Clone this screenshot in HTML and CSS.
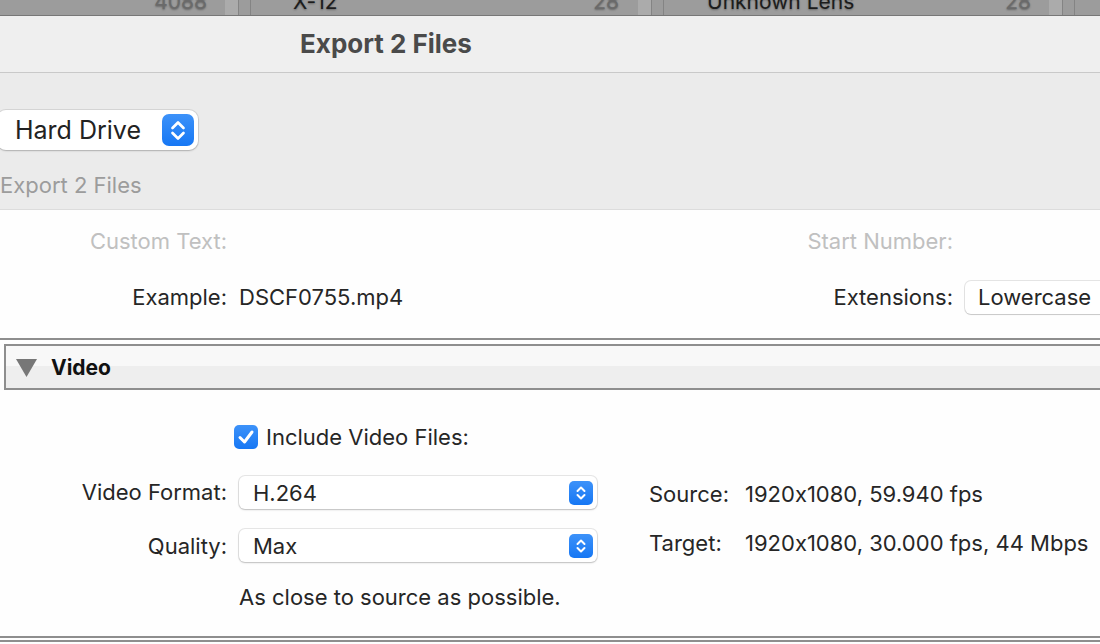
FILE: index.html
```html
<!DOCTYPE html>
<html>
<head>
<meta charset="utf-8">
<title>Export 2 Files</title>
<link rel="stylesheet" href="styles.css">
</head>
<body>
<div class="strip">
  <div class="cell cell-a"><span class="dim"></span><span class="dim">4088</span></div>
  <div class="sep"></div><div class="sep2"></div>
  <div class="cell cell-b"><span class="dark">X-12</span><span class="dim">28</span></div>
  <div class="sep"></div><div class="sep2"></div>
  <div class="cell cell-c"><span class="dark">Unknown Lens</span><span class="dim">28</span></div>
  <div class="sep"></div><div class="sep2"></div>
</div>

<header class="title-bar"><h1>Export 2 Files</h1></header>

<section class="dest">
  <div class="popup popup-big">
    <span>Hard Drive</span>
    <span class="stepper stepper-big">
      <svg viewBox="0 0 32 32" width="32" height="32"><polyline points="10.5,14 16,8.5 21.5,14" /><polyline points="10.5,19 16,24.5 21.5,19" /></svg>
    </span>
  </div>
  <div class="dest-sub">Export 2 Files</div>
</section>

<section class="naming">
  <div class="lbl muted">Custom Text:</div>
  <div></div>
  <div class="lbl muted">Start Number:</div>
  <div></div>

  <div class="lbl">Example:</div>
  <div class="val">DSCF0755.mp4</div>
  <div class="lbl">Extensions:</div>
  <div class="popup popup-ext"><span>Lowercase</span></div>
</section>

<div class="rule"></div>

<div class="panel-head">
  <svg class="disclosure" viewBox="0 0 21 18" width="21" height="18"><polygon points="0,0 21,0 10.5,18" /></svg>
  <span class="panel-title">Video</span>
</div>

<section class="video">
  <div></div>
  <label class="check-row">
    <span class="checkbox"><svg viewBox="0 0 24 24" width="24" height="24"><polyline points="6,12.5 10.5,17 18,7" /></svg></span>
    <span>Include Video Files:</span>
  </label>
  <div></div>

  <div class="lbl row2">Video Format:</div>
  <div class="popup popup-sm row2">
    <span>H.264</span>
    <span class="stepper stepper-sm"><svg viewBox="0 0 24 24" width="24" height="24"><polyline points="8.5,10 12,6.5 15.5,10" /><polyline points="8.5,14 12,17.5 15.5,14" /></svg></span>
  </div>
  <div class="info row2"><span class="info-lbl">Source:</span><span>1920x1080, 59.940 fps</span></div>

  <div class="lbl">Quality:</div>
  <div class="popup popup-sm">
    <span>Max</span>
    <span class="stepper stepper-sm"><svg viewBox="0 0 24 24" width="24" height="24"><polyline points="8.5,10 12,6.5 15.5,10" /><polyline points="8.5,14 12,17.5 15.5,14" /></svg></span>
  </div>
  <div class="info info-target"><span class="info-lbl">Target:</span><span>1920x1080, 30.000 fps, 44 Mbps</span></div>

  <div></div>
  <div class="note">As close to source as possible.</div>
  <div></div>
</section>

<div class="rule-bottom"></div>
</body>
</html>
```

FILE: styles.css
```css
html, body {
  margin: 0;
  padding: 0;
  width: 1100px;
  height: 644px;
  overflow: hidden;
  background: #fefefe;
  font-family: Inter, "Noto Sans", sans-serif;
  font-feature-settings: "calt" 0;
  color: #262626;
}

/* top strip (cropped table behind the sheet) */
.strip {
  height: 15px;
  background: #9c9c9c;
  border-bottom: 1px solid #777;
  display: flex;
  overflow: hidden;
}
.cell {
  display: flex;
  justify-content: space-between;
  align-self: flex-start;
  margin-top: -9px;
  font-size: 21px;
  line-height: 22px;
  box-sizing: border-box;
  text-shadow: 0 1px 2px rgba(0,0,0,0.35);
}
.cell-a { width: 225px; padding-right: 18px; }
.cell-b { width: 387px; padding: 0 19px 0 42px; }
.cell-c { width: 385px; padding: 0 18px 0 43px; }
.dim { color: #6a6a6a; }
.dark { color: #1c1c1c; }
.sep {
  width: 13px;
  height: 15px;
  background: #ababab;
  border-right: 1px solid #848484;
}
.sep2 {
  width: 11px;
  height: 15px;
  border-right: 1px solid #848484;
}

/* title */
.title-bar {
  height: 56px;
  background: #efefef;
  border-bottom: 1px solid #c9c9c9;
}
.title-bar h1 {
  margin: 0;
  padding-left: 300px;
  font-size: 26px;
  line-height: 56px;
  font-weight: 700;
  color: #4a4a4a;
}

/* destination */
.dest {
  background: #ebebeb;
  padding: 37px 0 11px;
  border-bottom: 1px solid #dcdcdc;
}
.popup {
  background: #fff;
  border-radius: 7px;
  box-shadow: 0 0 0 1px rgba(0,0,0,0.09), 0 1px 2px rgba(0,0,0,0.18);
  display: flex;
  align-items: center;
  justify-content: space-between;
  box-sizing: border-box;
}
.popup-big {
  width: 201px;
  height: 40px;
  margin-left: -3px;
  padding: 0 4px 0 18px;
  border-radius: 9px;
  font-size: 25px;
  color: #222;
}
.stepper {
  display: flex;
  background: linear-gradient(#3d92f9, #1677f4);
}
.stepper svg polyline {
  fill: none;
  stroke: #fff;
  stroke-linecap: round;
  stroke-linejoin: round;
}
.stepper-big { width: 32px; height: 32px; border-radius: 7px; }
.stepper-big svg polyline { stroke-width: 2.7; }
.stepper-sm { width: 24px; height: 24px; border-radius: 5px; }
.stepper-sm svg polyline { stroke-width: 2; }

.dest-sub {
  margin-top: 22px;
  font-size: 22px;
  line-height: 26px;
  color: #9c9c9c;
}

/* naming */
.naming {
  display: grid;
  grid-template-columns: 227px 1fr auto 135px;
  grid-auto-rows: 34px;
  column-gap: 12px;
  row-gap: 22px;
  align-items: center;
  padding: 14px 0 24px;
  font-size: 22px;
}
.lbl { text-align: right; white-space: nowrap; }
.muted { color: #c0c0c0; }
.val { white-space: nowrap; }
.popup-ext {
  width: 150px;
  height: 33px;
  padding-left: 13px;
  border-radius: 6px;
  box-shadow: 0 0 0 1px rgba(0,0,0,0.1), 0 1px 1px rgba(0,0,0,0.12);
}

.rule {
  height: 2px;
  background: #8e8e8e;
  margin-bottom: 4px;
}

/* panel header */
.panel-head {
  margin-left: 4px;
  height: 42px;
  border-top: 2px solid #8e8e8e;
  border-bottom: 2px solid #8e8e8e;
  border-left: 2px solid #8e8e8e;
  background: linear-gradient(#f8f8f8 0, #f8f8f8 20px, #eeeeee 20px, #eeeeee 100%);
  display: flex;
  align-items: center;
  gap: 14px;
  padding-left: 10px;
}
.disclosure { fill: #777; margin-top: 2px; }
.panel-title {
  font-size: 21px;
  font-weight: 700;
  color: #111;
}

/* video */
.video {
  display: grid;
  grid-template-columns: 227px 358px 1fr;
  grid-template-rows: 24px 40px 33px 27px;
  column-gap: 12px;
  row-gap: 20px;
  align-items: center;
  padding: 35px 0 27px;
  font-size: 22px;
}
.video .row2 { align-self: end; }
.video .lbl.row2 { line-height: 33px; }
.check-row {
  display: flex;
  align-items: center;
  gap: 8px;
  margin-left: -5px;
  white-space: nowrap;
}
.checkbox {
  width: 24px;
  height: 24px;
  border-radius: 5px;
  background: linear-gradient(#3d92f9, #1677f4);
  display: flex;
}
.checkbox polyline {
  fill: none;
  stroke: #fff;
  stroke-width: 3;
  stroke-linecap: round;
  stroke-linejoin: round;
}
.popup-sm {
  height: 33px;
  padding: 0 4px 0 14px;
  border-radius: 6px;
}
.info {
  display: flex;
  padding-left: 40px;
  white-space: nowrap;
}
.info.row2 { line-height: 33px; margin-bottom: -2px; }
.info-target { margin-bottom: 5px; }
.info-lbl { width: 96px; }
.note { white-space: nowrap; align-self: end; line-height: 24px; }

.rule-bottom {
  height: 2px;
  border-top: 2px solid #8e8e8e;
  border-bottom: 2px solid #8e8e8e;
}
```
